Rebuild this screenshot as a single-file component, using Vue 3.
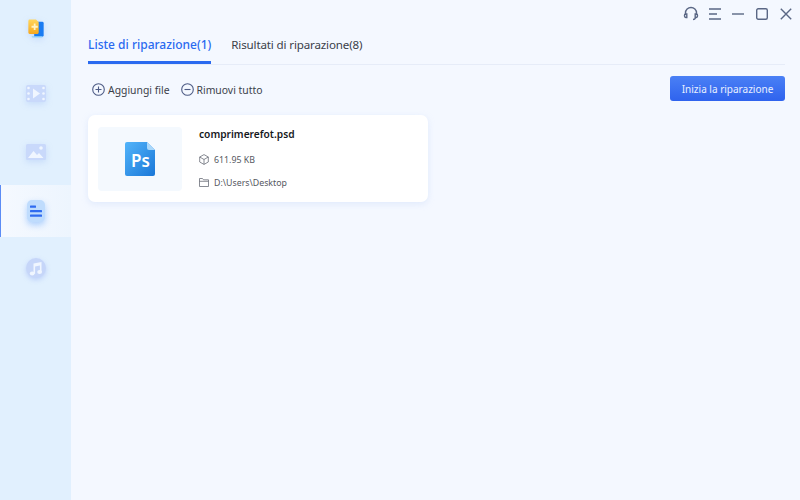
<script setup>
const navs = ['logo', 'video', 'photo', 'file', 'music']
</script>

<template>
  <div class="app">
    <aside class="side">
      <div v-for="n in navs" :key="n" class="nav" :class="['nav-' + n, { active: n === 'file' }]">
        <svg v-if="n === 'logo'" width="18" height="20" viewBox="0 0 20 22">
          <defs>
            <linearGradient id="lg1" x1="0" y1="0" x2="0" y2="1"><stop offset="0" stop-color="#ffd65c"/><stop offset="1" stop-color="#f7a81e"/></linearGradient>
          </defs>
          <path d="M8 3h9a1.500 1.500 0 0 1 1.500 1.500V18a1.500 1.500 0 0 1-1.500 1.500H8z" fill="#1a7cf2"/>
          <path d="M5 19h12v1.500H6z" fill="#8fd0fb"/>
          <path d="M3 .5h7l3 3V15a1.500 1.500 0 0 1-1.500 1.500H3A1.500 1.500 0 0 1 1.500 15V2A1.500 1.500 0 0 1 3 .5z" fill="url(#lg1)"/>
          <path d="M7.500 5h2v2.500H12v2H9.500V12h-2V9.500H5v-2h2.500z" fill="#fff3c4"/>
        </svg>
        <svg v-else-if="n === 'video'" width="20" height="17" viewBox="0 0 20 17">
          <rect width="20" height="17" rx="2" fill="#c9d9fb"/>
          <g fill="#f0f6ff"><circle cx="2.500" cy="3" r="1.300"/><circle cx="2.500" cy="8.500" r="1.300"/><circle cx="2.500" cy="14" r="1.300"/><circle cx="17.500" cy="3" r="1.300"/><circle cx="17.500" cy="8.500" r="1.300"/><circle cx="17.500" cy="14" r="1.300"/><path d="M7 3.500l7 5-7 5z"/></g>
        </svg>
        <svg v-else-if="n === 'photo'" width="20" height="16" viewBox="0 0 20 16">
          <rect width="20" height="16" rx="1.500" fill="#c9d9fb"/>
          <g fill="#f0f6ff"><circle cx="15" cy="4" r="1.800"/><path d="M2 14l5.500-7 3.500 4 2-2 4.500 5z"/></g>
        </svg>
        <div v-else-if="n === 'file'" class="file-ico">
          <svg width="14" height="14" viewBox="0 0 14 14" fill="#2f6bf0">
            <rect x="1" y="1.500" width="6" height="2.200" rx=".5"/>
            <rect x="1" y="6" width="12" height="2.200" rx=".5"/>
            <rect x="1" y="10.500" width="12" height="2.200" rx=".5"/>
          </svg>
        </div>
        <div v-else class="music-ico">
          <svg width="14" height="15" viewBox="0 0 14 15" fill="#f0f6ff">
            <path d="M4.500 2.500L12.500 1v10.200h-1.600V4.600L6.100 5.500v7.200H4.500z"/>
            <ellipse cx="3.200" cy="12.500" rx="2.400" ry="2"/>
            <ellipse cx="10.600" cy="11" rx="2.400" ry="2"/>
          </svg>
        </div>
      </div>
    </aside>

    <main class="main">
      <header class="winbar">
        <svg width="16" height="16" viewBox="0 0 16 16" fill="none" stroke="#5a6785" stroke-width="1.400">
          <path d="M2.500 9V7a5.500 5.500 0 0 1 11 0v2"/>
          <path d="M2.500 8h1.300v3.500H2.800A1.500 1.500 0 0 1 1.500 10V9.500A1.500 1.500 0 0 1 2.500 8zM13.500 8h-1.300v3.500h1A1.500 1.500 0 0 0 14.500 10V9.500A1.500 1.500 0 0 0 13.500 8z"/>
          <path d="M12.500 12c-.4 1-1.200 1.500-2.500 1.500"/>
        </svg>
        <svg width="13" height="12" viewBox="0 0 13 12" stroke="#5a6785" stroke-width="1.300">
          <path d="M0 1h12M0 6h8M0 11h12"/>
        </svg>
        <svg width="12" height="12" viewBox="0 0 12 12" stroke="#5a6785" stroke-width="1.400">
          <path d="M0 6h12"/>
        </svg>
        <svg class="gap-m" width="12" height="12" viewBox="0 0 12 12" fill="none" stroke="#5a6785" stroke-width="1.400">
          <rect x=".7" y=".7" width="10.600" height="10.600" rx="1.500"/>
        </svg>
        <svg class="gap-m" width="12" height="12" viewBox="0 0 12 12" stroke="#5a6785" stroke-width="1.400">
          <path d="M.8.800l10.400 10.400M11.200.800L.8 11.200"/>
        </svg>
      </header>

      <nav class="tabs">
        <div class="tab on">Liste di riparazione(1)</div>
        <div class="tab">Risultati di riparazione(8)</div>
      </nav>

      <div class="toolbar">
        <div class="tool">
          <svg width="13" height="13" viewBox="0 0 13 13" fill="none" stroke="#4d5b85" stroke-width="1.100">
            <circle cx="6.500" cy="6.500" r="5.800"/><path d="M3.500 6.500h6M6.500 3.500v6"/>
          </svg>
          <span>Aggiungi file</span>
        </div>
        <div class="tool">
          <svg width="13" height="13" viewBox="0 0 13 13" fill="none" stroke="#4d5b85" stroke-width="1.100">
            <circle cx="6.500" cy="6.500" r="5.800"/><path d="M3.500 6.500h6"/>
          </svg>
          <span>Rimuovi tutto</span>
        </div>
        <button class="start">Inizia la riparazione</button>
      </div>

      <section class="card">
        <div class="thumb">
          <svg width="30" height="34" viewBox="0 0 30 34">
            <defs>
              <linearGradient id="ps" x1="0" y1="0" x2="1" y2="1"><stop offset="0" stop-color="#52b4fa"/><stop offset="1" stop-color="#1a78d8"/></linearGradient>
            </defs>
            <path d="M2 0h20l8 8v24a2 2 0 0 1-2 2H2a2 2 0 0 1-2-2V2a2 2 0 0 1 2-2z" fill="url(#ps)"/>
            <path d="M22 0l8 8h-6a2 2 0 0 1-2-2z" fill="#a9d8fb"/>
            <text x="6" y="24.500" class="ps">Ps</text>
          </svg>
        </div>
        <div class="info">
          <div class="name">comprimerefot.psd</div>
          <div class="meta">
            <svg width="10" height="11" viewBox="0 0 10 11" fill="none" stroke="#6b6f78" stroke-width=".8">
              <path d="M5 .6l4.300 2.400v5L5 10.400.7 8V3zM.7 3L5 5.500 9.300 3M5 5.500v4.900"/>
            </svg>
            <span>611.95 KB</span>
          </div>
          <div class="meta">
            <svg width="10" height="9" viewBox="0 0 10 9" fill="none" stroke="#6b6f78" stroke-width=".8">
              <path d="M.5.500h3l1 1.300h5v6.700h-9zM.5 3.300h9"/>
            </svg>
            <span>D:\Users\Desktop</span>
          </div>
        </div>
      </section>
    </main>
  </div>
</template>

<style>
html, body { margin: 0; }
</style>

<style scoped>
.app {
  display: flex;
  width: 800px;
  height: 500px;
  overflow: hidden;
  background: #f4f8ff;
  font-family: "Noto Sans", "Open Sans", sans-serif;
}
.side {
  width: 71px;
  flex: none;
  background: #e1f0fe;
  display: flex;
  flex-direction: column;
  padding-top: 3px;
  box-sizing: border-box;
}
.nav {
  height: 52px;
  margin-bottom: 7px;
  display: flex;
  align-items: center;
  justify-content: center;
  box-sizing: border-box;
}
.nav svg { filter: drop-shadow(0 2px 3px rgba(120, 160, 240, .25)); }
.nav-logo { margin-bottom: 12px; }
.nav-file { margin-bottom: 5px; }
.active {
  background: linear-gradient(90deg, #f5f9ff, #edf5fe);
  border-left: 1px solid #5b8cf5;
  padding-right: 1px;
}
.file-ico {
  width: 18px;
  height: 22px;
  border-radius: 5px;
  background: #bfdcfd;
  box-shadow: 0 3px 6px rgba(90, 160, 250, .45);
  display: flex;
  align-items: center;
  justify-content: center;
}
.file-ico svg, .music-ico svg { filter: none; }
.music-ico {
  width: 20px;
  height: 20px;
  border-radius: 50%;
  background: #c6d6f9;
  box-shadow: 0 2px 5px rgba(120, 150, 240, .35);
  display: flex;
  align-items: center;
  justify-content: center;
}
.main {
  flex: 1;
  min-width: 0;
  padding: 0 15px 0 17px;
  display: flex;
  flex-direction: column;
}
.winbar {
  height: 29px;
  margin-right: -7px;
  padding-bottom: 2px;
  box-sizing: border-box;
  display: flex;
  align-items: center;
  justify-content: flex-end;
  gap: 10px;
}
.gap-m { margin-left: 2px; }
.tabs {
  display: flex;
  gap: 20px;
  height: 36px;
  border-bottom: 1px solid #e6ecf8;
  box-sizing: border-box;
}
.tab {
  font-size: 11.6px;
  letter-spacing: -.15px;
  line-height: 17px;
  padding-top: 7px;
  color: #3b3f4a;
  box-sizing: border-box;
  height: 35px;
}
.tab.on {
  font-size: 12px;
  letter-spacing: 0;
  color: #2a6af0;
  font-weight: 500;
  border-bottom: 3px solid #2a6af0;
}
.toolbar {
  display: flex;
  align-items: center;
  gap: 11px;
  height: 25px;
  margin-top: 11px;
  padding-left: 4px;
}
.tool {
  display: flex;
  align-items: center;
  gap: 3px;
  font-size: 10.4px;
  line-height: 14px;
  color: #3b3f4a;
  margin-top: 2px;
}
.start {
  margin-left: auto;
  width: 115px;
  height: 25px;
  border: 0;
  border-radius: 3px;
  padding: 0;
  background: linear-gradient(180deg, #4a80f5, #2f63ee);
  color: #e9f0ff;
  font: 10px "Noto Sans", "Open Sans", sans-serif;
}
.card {
  width: 340px;
  height: 87px;
  margin-top: 14px;
  padding: 11px 10px 12px;
  background: #fff;
  border-radius: 7px;
  box-shadow: 0 2px 6px rgba(190, 210, 245, .35);
  box-sizing: border-box;
  display: flex;
  gap: 17px;
}
.thumb {
  width: 84px;
  height: 64px;
  margin-top: 1px;
  flex: none;
  border-radius: 4px;
  background: #f4f9fe;
  display: flex;
  align-items: center;
  justify-content: center;
}
.ps {
  font: 600 17px "Noto Sans", sans-serif;
  fill: #fff;
}
.info {
  display: flex;
  flex-direction: column;
}
.name {
  font-size: 10.2px;
  font-weight: 600;
  line-height: 16px;
  margin-bottom: 2px;
  color: #16181d;
}
.meta {
  display: flex;
  align-items: center;
  gap: 5px;
  height: 15px;
  margin-top: 8px;
  font-size: 8.8px;
  color: #55585f;
}
</style>
